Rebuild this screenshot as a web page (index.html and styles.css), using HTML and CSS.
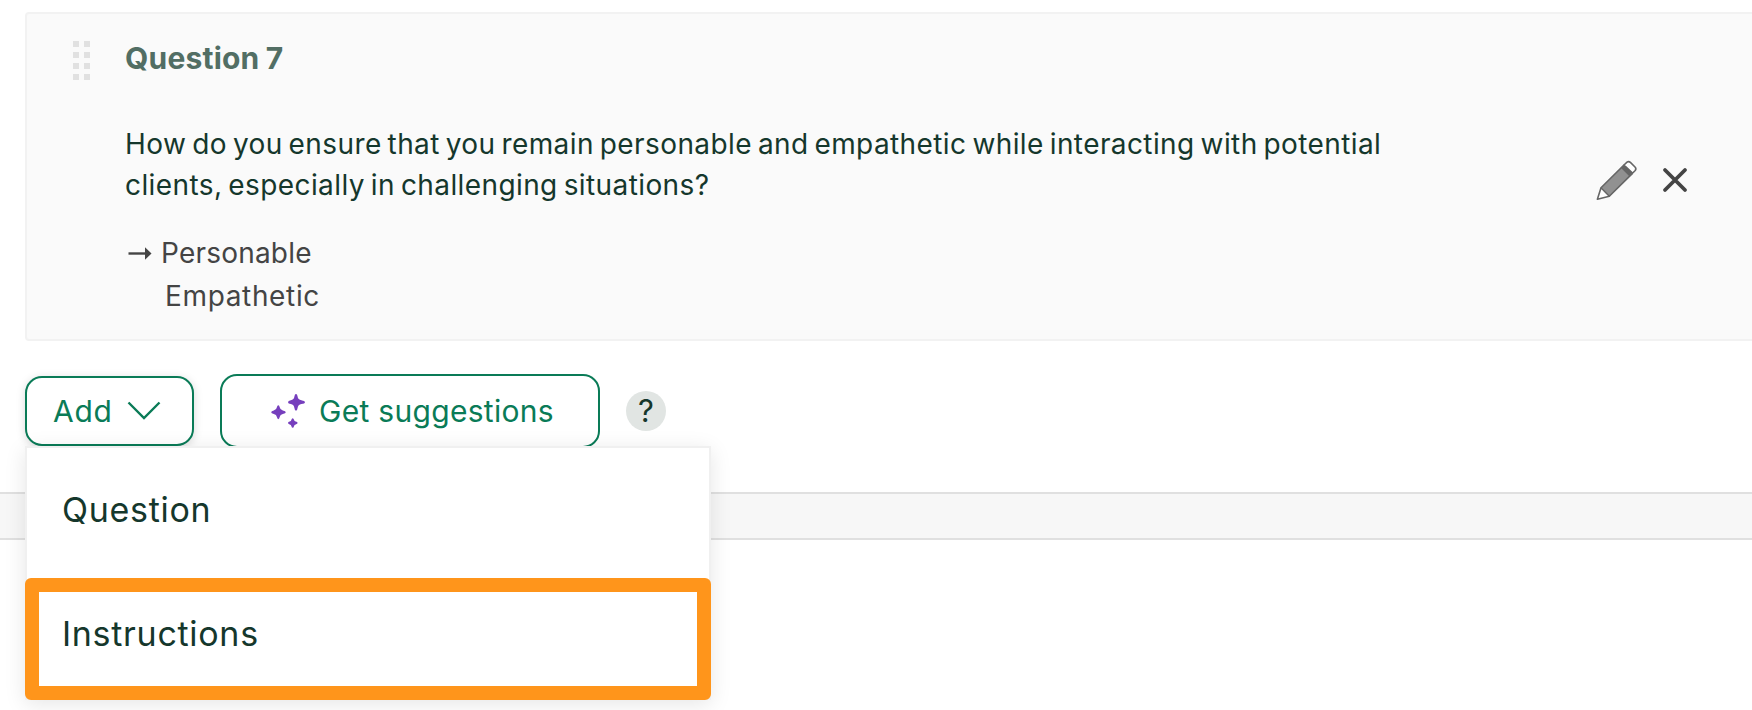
FILE: index.html
```html
<!DOCTYPE html>
<html lang="en">
<head>
    <meta charset="UTF-8">
    <meta name="viewport" content="width=device-width, initial-scale=1.0">
    <title>Interview Questions</title>
    <link rel="stylesheet" href="styles.css">
</head>
<body>
    <div class="question-card">
        <div class="drag-handle">
            <span></span><span></span>
            <span></span><span></span>
            <span></span><span></span>
            <span></span><span></span>
        </div>
        <div class="question-body">
            <h2>Question 7</h2>
            <p class="question-text">How do you ensure that you remain personable and empathetic while interacting with potential<br>clients, especially in challenging situations?</p>
            <ul class="attributes">
                <li>
                    <svg class="arrow" width="24" height="16" viewBox="0 0 24 16">
                        <path d="M0.5 7.5H18" fill="none" stroke="#444" stroke-width="2.4"/>
                        <path d="M17 1.3L23.5 7.5L17 13.7Z" fill="#444"/>
                    </svg>
                    <span>Personable</span>
                </li>
                <li class="indent">Empathetic</li>
            </ul>
        </div>
        <div class="question-actions">
            <svg width="42" height="42" viewBox="0 -1 42 42">
                <path d="M5.2 27.5L27.8 5L36.5 13.5L13.8 36.2Z" fill="#919191"/>
                <path d="M24.8 7.7L28 4.5L36.8 13.2L33.6 16.4Z" fill="#666"/>
                <path d="M28 5L31 2.2Q32.7 1 34.4 2.4L39 7Q40.6 8.7 39.2 10.5L36.5 13.2Z" fill="#fff" stroke="#666" stroke-width="1.6"/>
                <path d="M5 27.8L1.4 39.3L13.3 36.3Z" fill="#fff" stroke="#666" stroke-width="1.6" stroke-linejoin="round"/>
                <path d="M5 27.8L28 5M13.3 36.3L36.5 13.4" fill="none" stroke="#666" stroke-width="1.6"/>
            </svg>
            <svg width="26" height="26" viewBox="0 0 26 26">
                <path d="M3 3L23 23M23 3L3 23" fill="none" stroke="#444" stroke-width="3.8" stroke-linecap="round"/>
            </svg>
        </div>
    </div>

    <div class="toolbar">
        <div class="dropdown">
            <button class="btn btn-add">
                <span>Add</span>
                <svg width="34" height="20" viewBox="0 0 34 20">
                    <path d="M1.5 1.5L17 17L32.5 1.5" fill="none" stroke="#0a7b57" stroke-width="2.4"/>
                </svg>
            </button>
            <div class="menu">
                <div class="menu-item">Question</div>
                <div class="menu-item highlighted">Instructions</div>
            </div>
        </div>
        <button class="btn btn-suggest">
            <svg width="34" height="36" viewBox="0 0 34 36" fill="#763fbd">
                <path d="M25 1Q26.2 1 26.6 3.4Q27 6.6 30.4 7.2Q34 7.9 34 9.2Q34 10.5 30.4 11.1Q27 11.8 26.6 15Q26.2 17.8 25 17.8Q23.8 17.8 23.4 15Q23 11.8 19.8 11.1Q17 10.5 17 9.2Q17 7.9 19.8 7.2Q23 6.6 23.4 3.4Q23.8 1 25 1Z"/>
                <path d="M7.3 12.2Q8.3 12.2 8.7 14.3Q9.1 16.9 11.8 17.5Q14.8 18 14.8 19.2Q14.8 20.4 11.8 20.9Q9.1 21.5 8.7 24.1Q8.3 26.2 7.3 26.2Q6.3 26.2 5.9 24.1Q5.5 21.5 2.8 20.9Q0.2 20.4 0.2 19.2Q0.2 18 2.8 17.5Q5.5 16.9 5.9 14.3Q6.3 12.2 7.3 12.2Z"/>
                <path d="M21.7 25.2Q22.6 25.2 23 26.8Q23.3 28.3 24.7 28.6Q26.6 29 26.6 30Q26.6 31 24.7 31.4Q23.3 31.7 23 33.2Q22.6 34.8 21.7 34.8Q20.8 34.8 20.4 33.2Q20.1 31.7 18.7 31.4Q17 31 17 30Q17 29 18.7 28.6Q20.1 28.3 20.4 26.8Q20.8 25.2 21.7 25.2Z"/>
            </svg>
            <span>Get suggestions</span>
        </button>
        <span class="help">?</span>
    </div>

    <div class="divider"></div>
</body>
</html>
```

FILE: styles.css
```css
* {
    box-sizing: border-box;
}

body {
    margin: 0;
    height: 710px;
    overflow: hidden;
    font-family: Inter, "Liberation Sans", Arial, sans-serif;
    font-size: 28px;
    color: #15372c;
    background-color: #fff;
}

.question-card {
    display: flex;
    height: 329px;
    margin: 12px -20px 0 25px;
    border: 2px solid #f2f2f2;
    border-radius: 4px;
    background-color: #fafafa;
}

.drag-handle {
    display: grid;
    grid-template-columns: repeat(2, 6px);
    grid-auto-rows: 6px;
    gap: 5px;
    width: 98px;
    padding: 27px 0 0 46px;
}

.drag-handle span {
    background-color: #e1e1e1;
}

.question-body {
    width: 1300px;
}

h2 {
    margin: 24px 0 0;
    font-size: 30px;
    line-height: 40px;
    font-weight: 700;
    letter-spacing: 0.2px;
    word-spacing: -1px;
    color: #526e64;
}

.question-text {
    margin: 46px 0 0;
    line-height: 41px;
    letter-spacing: 0.4px;
    word-spacing: -2.3px;
    white-space: nowrap;
}

.attributes {
    list-style: none;
    margin: 26px 0 0;
    padding: 0;
    line-height: 43px;
    letter-spacing: 0.2px;
    color: #444;
}

.attributes li {
    display: flex;
    align-items: center;
}

.arrow {
    margin: 0 9px 0 3px;
}

.indent {
    padding-left: 40px;
    letter-spacing: 0.65px;
}

.question-actions {
    display: flex;
    align-items: center;
    gap: 24px;
    height: 42px;
    margin: 145px 0 0 171px;
}

.toolbar {
    display: flex;
    align-items: flex-start;
    height: 118px;
    margin: 33px 0 0 25px;
}

.dropdown {
    position: relative;
    margin: 2px 26px 0 0;
}

.btn {
    display: flex;
    align-items: center;
    padding: 0;
    border: 2px solid #0a7b57;
    border-radius: 17px;
    background-color: #fff;
    font-family: inherit;
    font-size: 30px;
    letter-spacing: 0.3px;
    color: #0a7b57;
}

.btn-add {
    width: 169px;
    height: 70px;
    padding-left: 26px;
    gap: 14px;
    letter-spacing: 0.7px;
    box-shadow: 0 2px 10px rgba(0, 0, 0, 0.15);
}

.btn-suggest {
    width: 380px;
    height: 74px;
    padding-left: 49px;
    gap: 14px;
}

.help {
    width: 40px;
    height: 40px;
    margin: 17px 0 0 26px;
    border-radius: 50%;
    background-color: #e1e5e3;
    font-size: 31px;
    line-height: 40px;
    text-align: center;
}

.menu {
    position: absolute;
    top: 70px;
    left: 0;
    z-index: 1;
    width: 686px;
    height: 254px;
    border: 2px solid #f0f0f0;
    background-color: #fff;
    box-shadow: 0 4px 20px rgba(0, 0, 0, 0.1);
    font-size: 34px;
    letter-spacing: 0.7px;
}

.menu-item {
    height: 130px;
    padding: 42px 0 0 35px;
    line-height: 40px;
}

.menu-item.highlighted {
    width: 686px;
    height: 122px;
    margin-left: -2px;
    padding: 22px 0 0 23px;
    border: 14px solid #ff951b;
    border-radius: 6px;
}

.divider {
    height: 48px;
    border-top: 2px solid #e0e0e0;
    border-bottom: 2px solid #e0e0e0;
    background-color: #f7f7f7;
}
```
